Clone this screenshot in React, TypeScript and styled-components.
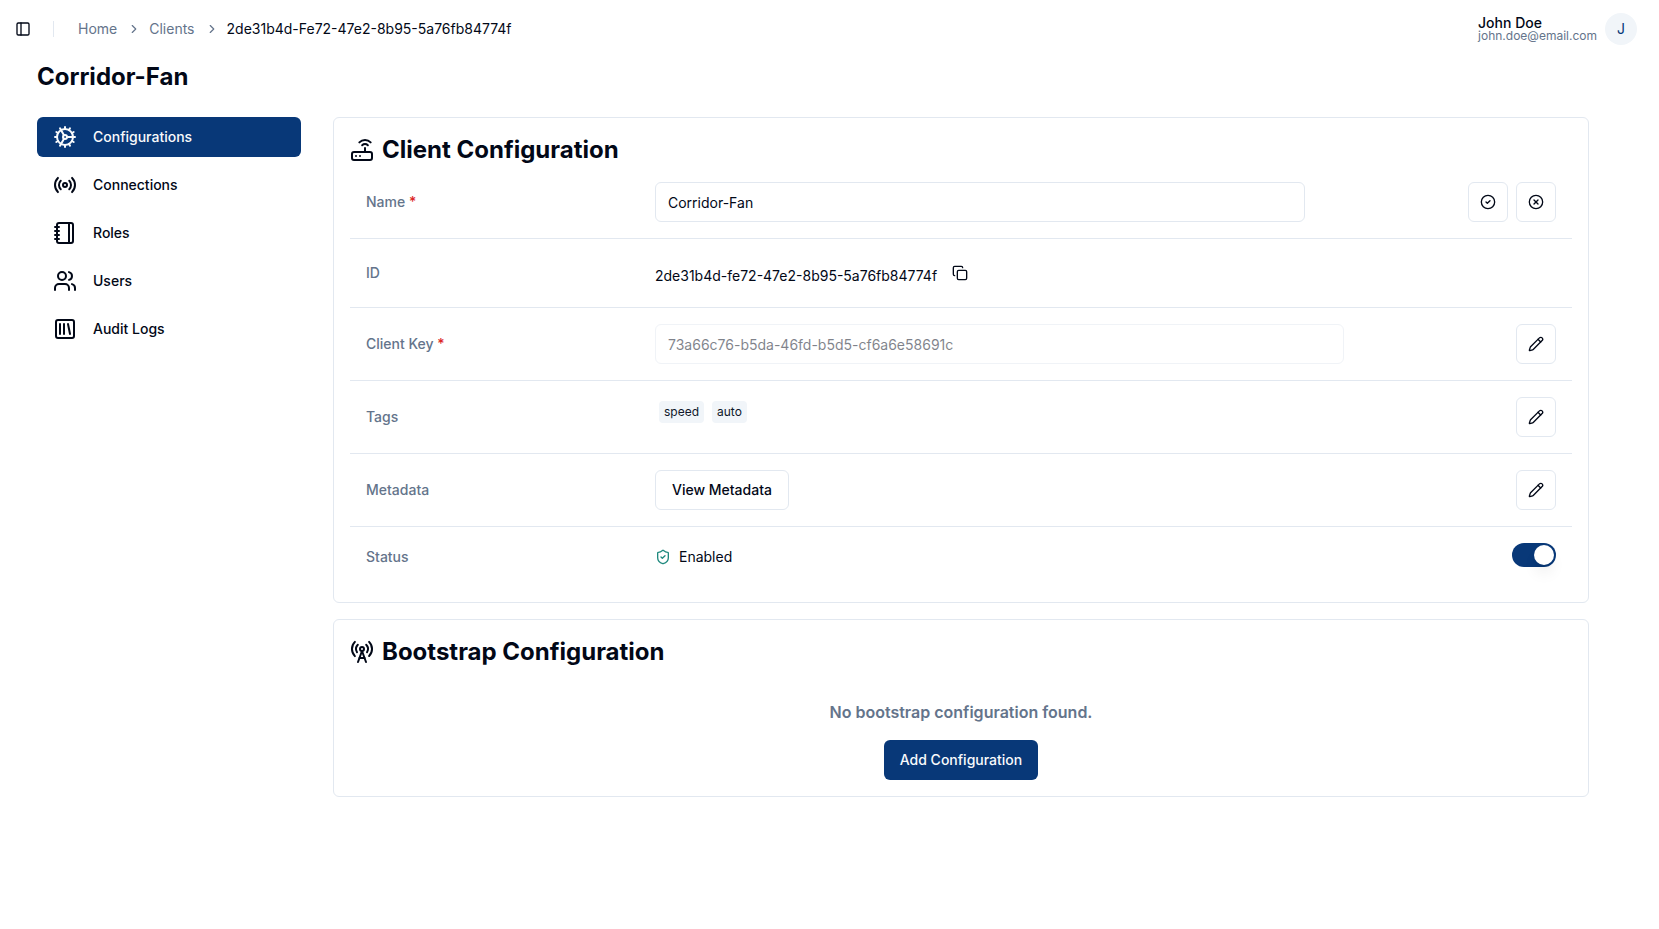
import React, { useState } from "react";
import styled, { createGlobalStyle, css } from "styled-components";
import {
  ChevronRight,
  CircleCheck,
  CircleX,
  Cog,
  Copy,
  Notebook,
  PanelLeft,
  Pencil,
  Radio,
  RadioTower,
  Router,
  ShieldCheck,
  SquareLibrary,
  Users,
} from "lucide-react";

const color = {
  text: "#020817",
  muted: "#64748b",
  border: "#e2e8f0",
  subtle: "#f1f5f9",
  tagText: "#0f172a",
  primary: "#083878",
  onPrimary: "#f8fafc",
  danger: "#dc2626",
  success: "#1f897e",
};

const GlobalStyle = createGlobalStyle`
  *, *::before, *::after { box-sizing: border-box; }
  body {
    margin: 0;
    background: #fff;
    color: ${color.text};
    font-family: Inter, "Liberation Sans", sans-serif;
    font-size: 14px;
    line-height: 20px;
  }
  button, input { font: inherit; color: inherit; }
  button { cursor: pointer; }
  a { color: inherit; text-decoration: none; }
  svg { display: block; flex-shrink: 0; }
`;

const Header = styled.header`
  display: flex;
  align-items: center;
  padding: 13px 22px 13px 9px;
`;

const PlainButton = styled.button`
  display: flex;
  align-items: center;
  border: 0;
  background: none;
`;

const SidebarTrigger = styled(PlainButton)`
  padding: 6px;
`;

const Separator = styled.div`
  width: 1px;
  height: 16px;
  margin: 0 24px 0 16px;
  background: ${color.border};
`;

const Crumbs = styled.ol`
  display: flex;
  align-items: center;
  gap: 8px;
  margin: 0;
  padding: 0;
  list-style: none;
`;

const Crumb = styled.li`
  display: flex;
  align-items: center;
  gap: 10px;
  color: ${color.muted};

  &:last-child {
    color: ${color.text};
  }
`;

const Account = styled.div`
  display: flex;
  align-items: center;
  gap: 8px;
  margin-left: auto;
`;

const AccountName = styled.div`
  font-weight: 500;
  line-height: 14px;
`;

const AccountEmail = styled.div`
  color: ${color.muted};
  font-size: 12px;
  line-height: 12px;
`;

const Avatar = styled.div`
  display: grid;
  place-items: center;
  width: 32px;
  height: 32px;
  border-radius: 50%;
  background: ${color.subtle};
  color: ${color.primary};
`;

const Main = styled.main`
  padding: 3px 70px 32px 37px;
`;

const PageTitle = styled.h1`
  margin: 0 0 24px;
  font-size: 24px;
  font-weight: 700;
  line-height: 32px;
`;

const Columns = styled.div`
  display: flex;
  align-items: flex-start;
  gap: 32px;
`;

const SideNav = styled.nav`
  display: flex;
  flex: 0 0 264px;
  flex-direction: column;
  gap: 8px;
`;

const NavItem = styled.a<{ $active?: boolean }>`
  display: flex;
  align-items: center;
  gap: 16px;
  height: 40px;
  padding: 0 16px;
  border-radius: 6px;
  font-weight: 500;
  ${(p) =>
    p.$active &&
    css`
      background: ${color.primary};
      color: ${color.onPrimary};
    `}
`;

const Content = styled.div`
  display: flex;
  flex: 1;
  flex-direction: column;
  gap: 16px;
  min-width: 0;
`;

const Card = styled.section`
  padding: 16px;
  border: 1px solid ${color.border};
  border-radius: 6px;
`;

const CardTitle = styled.h2`
  display: flex;
  align-items: center;
  gap: 8px;
  margin: 0;
  font-size: 24px;
  font-weight: 700;
  line-height: 32px;
`;

const Table = styled.table`
  width: 100%;
  table-layout: fixed;
  border-spacing: 0;
`;

const Row = styled.tr`
  & > * {
    padding: 16px;
    border-bottom: 1px solid ${color.border};
  }
  &:last-child > * {
    border-bottom: 0;
  }
`;

const Label = styled.th`
  width: 289px;
  color: ${color.muted};
  font-weight: 500;
  text-align: left;
`;

const Required = styled.span`
  color: ${color.danger};
`;

const Cell = styled.div<{ $align?: string }>`
  display: flex;
  align-items: ${(p) => p.$align ?? "center"};
`;

const StatusCell = styled(Cell)`
  height: 27px;
`;

const Value = styled.div`
  display: flex;
  flex: 1;
  align-items: center;
  gap: 8px;
`;

const Actions = styled.div`
  display: flex;
  gap: 8px;
`;

const TextField = styled.input`
  width: 80%;
  height: 40px;
  padding: 8px 12px;
  border: 1px solid ${color.border};
  border-radius: 6px;
  background: #fff;

  &:disabled {
    opacity: 0.5;
  }
`;

const CopyButton = styled(PlainButton)`
  padding: 10px 15px;
`;

const Button = styled.button<{ $primary?: boolean }>`
  height: 40px;
  padding: 0 16px;
  border: ${(p) => (p.$primary ? "0" : `1px solid ${color.border}`)};
  border-radius: 6px;
  background: ${(p) => (p.$primary ? color.primary : "#fff")};
  color: ${(p) => (p.$primary ? color.onPrimary : color.text)};
  font-weight: 500;
`;

const IconButton = styled(Button)`
  display: grid;
  place-items: center;
  width: 40px;
  padding: 0;
`;

const TagList = styled.ul`
  display: flex;
  flex: 1;
  gap: 8px;
  margin: 0;
  padding: 4px;
  list-style: none;
`;

const Tag = styled.li`
  padding: 3px 5px;
  border-radius: 4px;
  background: ${color.subtle};
  color: ${color.tagText};
  font-size: 12px;
  line-height: 16px;
`;

const Switch = styled.input`
  appearance: none;
  align-self: flex-start;
  width: 44px;
  height: 24px;
  margin: 0;
  padding: 2px;
  border-radius: 12px;
  background: ${color.border};
  cursor: pointer;

  &::before {
    content: "";
    display: block;
    width: 20px;
    height: 20px;
    border-radius: 50%;
    background: #fff;
    box-shadow: 0 10px 15px -3px rgb(0 0 0 / 0.1), 0 4px 6px -4px rgb(0 0 0 / 0.1);
  }
  &:checked {
    background: ${color.primary};
  }
  &:checked::before {
    margin-left: 20px;
  }
`;

const EmptyState = styled.div`
  display: flex;
  flex-direction: column;
  align-items: center;
  gap: 16px;
  padding-top: 32px;
`;

const EmptyText = styled.p`
  margin: 0;
  color: ${color.muted};
  font-size: 16px;
  font-weight: 600;
  line-height: 24px;
`;

const navItems = [
  { label: "Configurations", icon: Cog },
  { label: "Connections", icon: Radio },
  { label: "Roles", icon: Notebook },
  { label: "Users", icon: Users },
  { label: "Audit Logs", icon: SquareLibrary },
];

const tags = ["speed", "auto"];

function EditButton({ field }: { field: string }) {
  return (
    <IconButton type="button" aria-label={`Edit ${field}`}>
      <Pencil size={16} />
    </IconButton>
  );
}

export default function App() {
  const [name, setName] = useState("Corridor-Fan");
  const [enabled, setEnabled] = useState(true);

  return (
    <>
      <GlobalStyle />
      <Header>
        <SidebarTrigger type="button" aria-label="Toggle sidebar">
          <PanelLeft size={16} />
        </SidebarTrigger>
        <Separator />
        <nav aria-label="Breadcrumb">
          <Crumbs>
            <Crumb>
              <a href="#home">Home</a>
              <ChevronRight size={14} />
            </Crumb>
            <Crumb>
              <a href="#clients">Clients</a>
              <ChevronRight size={14} />
            </Crumb>
            <Crumb aria-current="page">2de31b4d-Fe72-47e2-8b95-5a76fb84774f</Crumb>
          </Crumbs>
        </nav>
        <Account>
          <div>
            <AccountName>John Doe</AccountName>
            <AccountEmail>john.doe@email.com</AccountEmail>
          </div>
          <Avatar>J</Avatar>
        </Account>
      </Header>

      <Main>
        <PageTitle>Corridor-Fan</PageTitle>
        <Columns>
          <SideNav aria-label="Client sections">
            {navItems.map(({ label, icon: Icon }, i) => (
              <NavItem key={label} href="#" $active={i === 0}>
                <Icon size={24} />
                {label}
              </NavItem>
            ))}
          </SideNav>

          <Content>
            <Card>
              <CardTitle>
                <Router size={24} />
                Client Configuration
              </CardTitle>
              <Table>
                <tbody>
                  <Row>
                    <Label scope="row">
                      <label htmlFor="name">
                        Name <Required>*</Required>
                      </label>
                    </Label>
                    <td>
                      <Cell>
                        <Value>
                          <TextField id="name" value={name} onChange={(e) => setName(e.target.value)} />
                        </Value>
                        <Actions>
                          <IconButton type="button" aria-label="Save name">
                            <CircleCheck size={16} />
                          </IconButton>
                          <IconButton type="button" aria-label="Cancel">
                            <CircleX size={16} />
                          </IconButton>
                        </Actions>
                      </Cell>
                    </td>
                  </Row>
                  <Row>
                    <Label scope="row">ID</Label>
                    <td>
                      <Cell $align="baseline">
                        <span>2de31b4d-fe72-47e2-8b95-5a76fb84774f</span>
                        <CopyButton type="button" aria-label="Copy ID">
                          <Copy size={16} />
                        </CopyButton>
                      </Cell>
                    </td>
                  </Row>
                  <Row>
                    <Label scope="row">
                      <label htmlFor="key">
                        Client Key <Required>*</Required>
                      </label>
                    </Label>
                    <td>
                      <Cell>
                        <Value>
                          <TextField id="key" disabled value="73a66c76-b5da-46fd-b5d5-cf6a6e58691c" />
                        </Value>
                        <EditButton field="client key" />
                      </Cell>
                    </td>
                  </Row>
                  <Row>
                    <Label scope="row">Tags</Label>
                    <td>
                      <Cell $align="flex-start">
                        <TagList>
                          {tags.map((tag) => (
                            <Tag key={tag}>{tag}</Tag>
                          ))}
                        </TagList>
                        <EditButton field="tags" />
                      </Cell>
                    </td>
                  </Row>
                  <Row>
                    <Label scope="row">Metadata</Label>
                    <td>
                      <Cell>
                        <Value>
                          <Button type="button">View Metadata</Button>
                        </Value>
                        <EditButton field="metadata" />
                      </Cell>
                    </td>
                  </Row>
                  <Row>
                    <Label scope="row">
                      <label htmlFor="status">Status</label>
                    </Label>
                    <td>
                      <StatusCell>
                        <Value>
                          <ShieldCheck size={16} color={color.success} />
                          {enabled ? "Enabled" : "Disabled"}
                        </Value>
                        <Switch
                          id="status"
                          type="checkbox"
                          role="switch"
                          checked={enabled}
                          onChange={(e) => setEnabled(e.target.checked)}
                        />
                      </StatusCell>
                    </td>
                  </Row>
                </tbody>
              </Table>
            </Card>

            <Card>
              <CardTitle>
                <RadioTower size={24} />
                Bootstrap Configuration
              </CardTitle>
              <EmptyState>
                <EmptyText>No bootstrap configuration found.</EmptyText>
                <Button type="button" $primary>
                  Add Configuration
                </Button>
              </EmptyState>
            </Card>
          </Content>
        </Columns>
      </Main>
    </>
  );
}
